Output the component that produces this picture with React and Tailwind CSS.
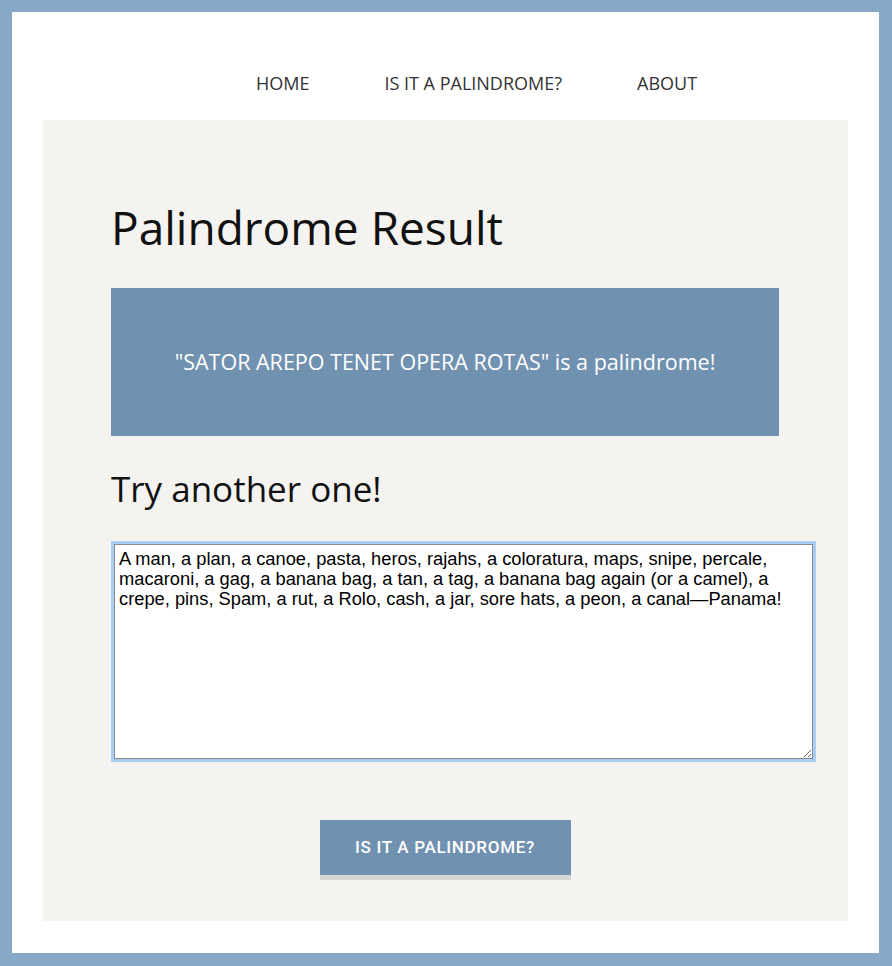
import React from "react";

const SAMPLE =
  "A man, a plan, a canoe, pasta, heros, rajahs, a coloratura, maps, snipe, percale, macaroni, a gag, a banana bag, a tan, a tag, a banana bag again (or a camel), a crepe, pins, Spam, a rut, a Rolo, cash, a jar, sore hats, a peon, a canal\u2014Panama!";

function NavBar() {
  const links = ["HOME", "IS IT A PALINDROME?", "ABOUT"];
  return (
    <nav className="flex justify-center gap-[75px] pl-[62px] pt-[60px] pb-[26px]">
      {links.map((link) => (
        <a
          key={link}
          href="#"
          className="text-[18px] leading-[22px] text-[#333333]"
        >
          {link}
        </a>
      ))}
    </nav>
  );
}

export default function App() {
  return (
    <div
      className="min-h-[966px] bg-[#88a8c8] p-[12px] pr-[13px] pb-[13px]"
      style={{ fontFamily: '"Open Sans", sans-serif' }}
    >
      <div className="bg-white min-h-[941px] px-[31px] pb-[32px]">
        <NavBar />
        <main className="bg-[#f4f3f0] pl-[68px] pr-[69px] pt-[79px] pb-[46px]">
          <h1 className="text-[46px] leading-[56px] text-[#111111]">
            Palindrome Result
          </h1>
          <div className="mt-[33px] bg-[#7191b1] h-[148px] flex items-center justify-center">
            <p className="text-[21.5px] text-white">
              "SATOR AREPO TENET OPERA ROTAS" is a palindrome!
            </p>
          </div>
          <h2 className="mt-[31px] text-[35px] leading-[44px] text-[#111111]">
            Try another one!
          </h2>
          <form className="mt-[33px] flex flex-col items-center">
            <textarea
              defaultValue={SAMPLE}
              className="block w-[699px] h-[215px] ml-[3px] self-start bg-white border border-[#8a8a8a] outline outline-[3px] outline-[#a9cdf3] pl-[4px] pr-[3px] pt-[4px] text-[18.3px] leading-[20px] text-black resize-y"
              style={{ fontFamily: '"Liberation Sans", Arial, sans-serif' }}
            />
            <button
              type="button"
              className="mt-[61px] w-[251px] h-[55px] bg-[#7191b1] text-white text-[17px] font-medium tracking-[0.7px] shadow-[0_5px_0_#d8d6d2]"
              style={{ fontFamily: "Roboto, sans-serif" }}
            >
              IS IT A PALINDROME?
            </button>
          </form>
        </main>
      </div>
    </div>
  );
}
